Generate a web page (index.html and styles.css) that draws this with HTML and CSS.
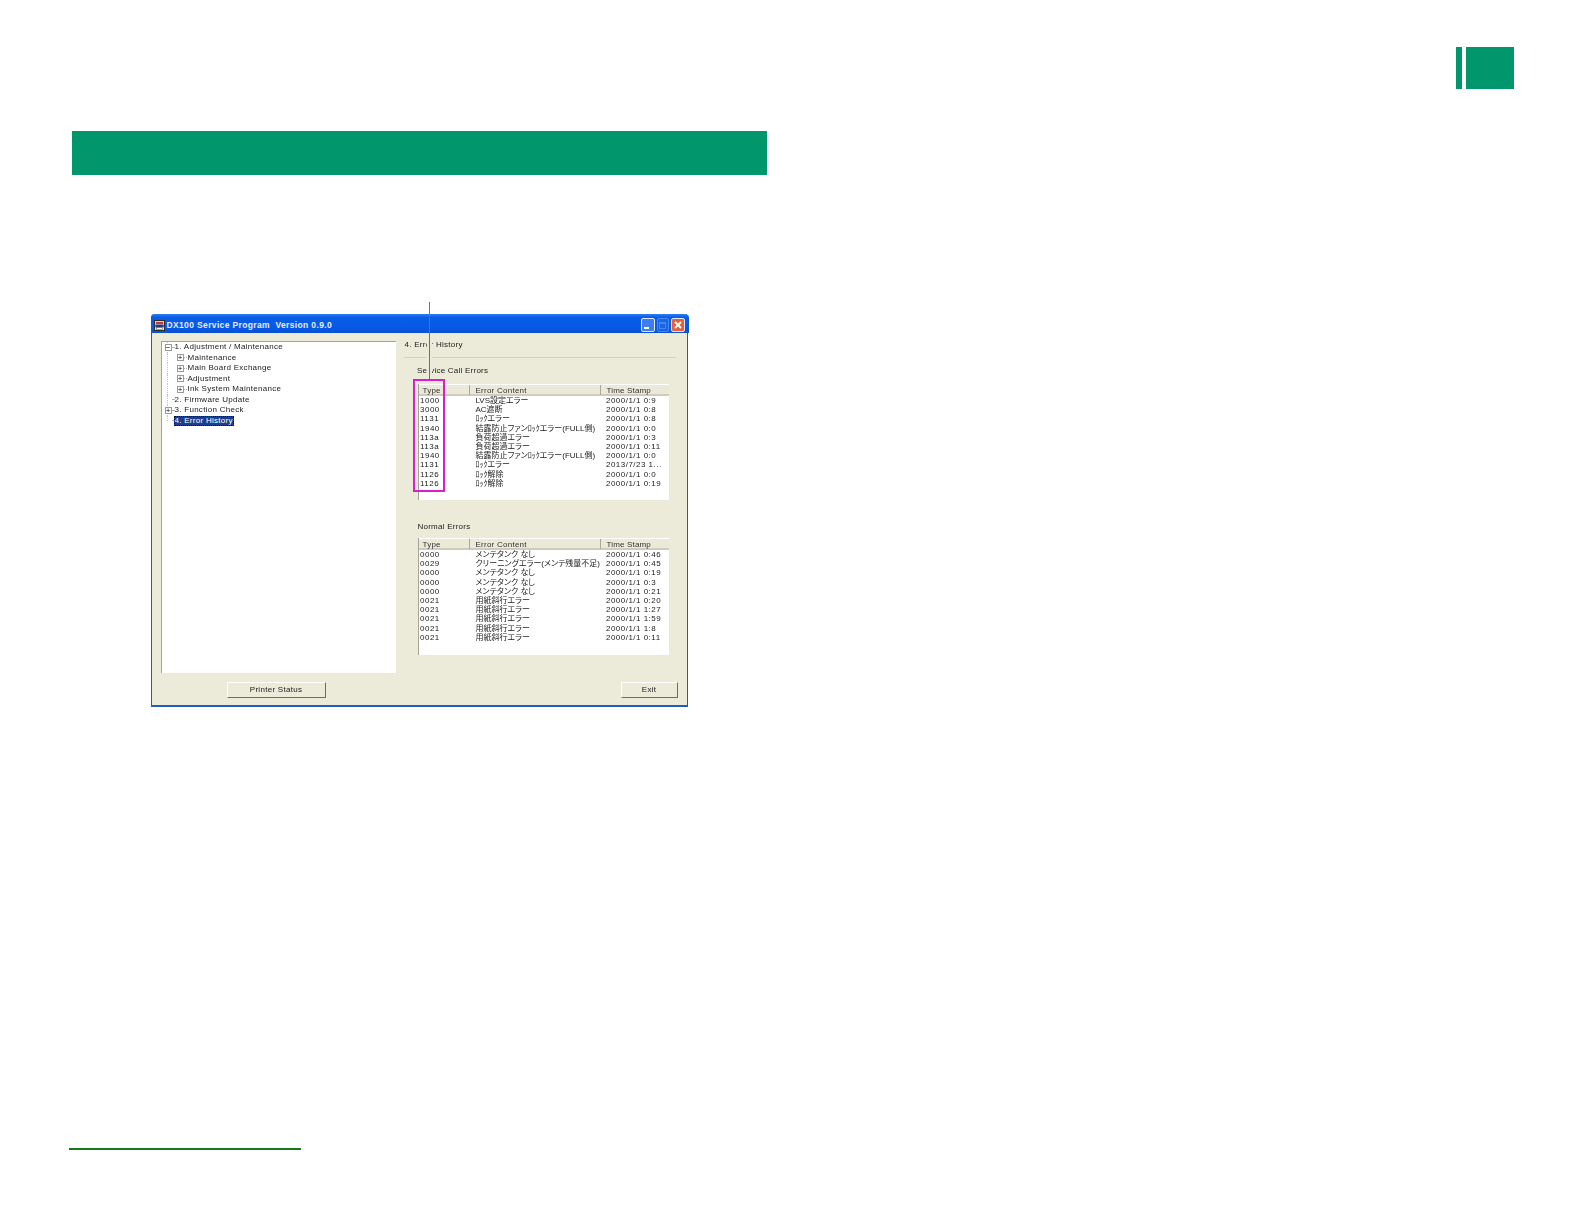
FILE: index.html
```html
<!DOCTYPE html>
<html lang="ja">
<head>
<meta charset="utf-8">
<title>DX100 Service Program</title>
<link rel="stylesheet" href="styles.css">
</head>
<body>
<div class="page">
  <div class="tabmark"><span class="tab-thin"></span><span class="tab-wide"></span></div>
  <div class="banner"></div>
  <figure class="figure">
    <div class="window">
      <div class="titlebar">
        <svg class="app-icon" viewBox="0 0 12 12"><rect x="0.5" y="0.5" width="11" height="11" fill="#dfe6f2" stroke="#222"/><rect x="2" y="2" width="8" height="2.5" fill="#c43b2e"/><rect x="1.5" y="5" width="9" height="3" fill="#1c3a78"/><rect x="3" y="8.5" width="6" height="2" fill="#fff" stroke="#333" stroke-width="0.5"/></svg>
        <span class="title-text">DX100 Service Program&nbsp; Version 0.9.0</span>
        <span class="tb-btn tb-min"><i></i></span>
        <span class="tb-btn tb-max"><i></i></span>
        <span class="tb-btn tb-close"><svg viewBox="0 0 12 12"><path d="M3 3 L9 9 M9 3 L3 9" stroke="#fff" stroke-width="1.8" fill="none"/></svg></span>
      </div>
      <div class="main">
        <div class="tree">
          <div class="node"><span class="ex">−</span><span class="dash"></span><span class="lbl">1. Adjustment / Maintenance</span></div>
          <div class="node lvl2"><span class="ex">+</span><span class="dash"></span><span class="lbl">Maintenance</span></div>
          <div class="node lvl2"><span class="ex">+</span><span class="dash"></span><span class="lbl">Main Board Exchange</span></div>
          <div class="node lvl2"><span class="ex">+</span><span class="dash"></span><span class="lbl">Adjustment</span></div>
          <div class="node lvl2"><span class="ex">+</span><span class="dash"></span><span class="lbl">Ink System Maintenance</span></div>
          <div class="node"><span class="ex none"></span><span class="dash"></span><span class="lbl">2. Firmware Update</span></div>
          <div class="node"><span class="ex">+</span><span class="dash"></span><span class="lbl">3. Function Check</span></div>
          <div class="node last"><span class="ex none"></span><span class="dash"></span><span class="lbl selected">4. Error History</span></div>
        </div>
        <div class="panel">
          <div class="panel-head">4. Error History</div>
          <div class="sep"></div>
          <div class="group-label first">Service Call Errors</div>
          <div class="list">
            <div class="row head"><span>Type</span><span>Error Content</span><span>Time Stamp</span></div>
            <div class="row"><span>1000</span><span>LVS設定エラー</span><span>2000/1/1 0:9</span></div>
            <div class="row"><span>3000</span><span>AC遮断</span><span>2000/1/1 0:8</span></div>
            <div class="row"><span>1131</span><span>ﾛｯｸエラー</span><span>2000/1/1 0:8</span></div>
            <div class="row"><span>1940</span><span>結露防止ファンﾛｯｸエラー(FULL側)</span><span>2000/1/1 0:0</span></div>
            <div class="row"><span>113a</span><span>負荷超過エラー</span><span>2000/1/1 0:3</span></div>
            <div class="row"><span>113a</span><span>負荷超過エラー</span><span>2000/1/1 0:11</span></div>
            <div class="row"><span>1940</span><span>結露防止ファンﾛｯｸエラー(FULL側)</span><span>2000/1/1 0:0</span></div>
            <div class="row"><span>1131</span><span>ﾛｯｸエラー</span><span>2013/7/23 1...</span></div>
            <div class="row"><span>1126</span><span>ﾛｯｸ解除</span><span>2000/1/1 0:0</span></div>
            <div class="row"><span>1126</span><span>ﾛｯｸ解除</span><span>2000/1/1 0:19</span></div>
          </div>
          <div class="group-label second">Normal Errors</div>
          <div class="list list-b">
            <div class="row head"><span>Type</span><span>Error Content</span><span>Time Stamp</span></div>
            <div class="row"><span>0000</span><span>メンテタンク なし</span><span>2000/1/1 0:46</span></div>
            <div class="row"><span>0029</span><span>クリーニングエラー(メンテ残量不足)</span><span>2000/1/1 0:45</span></div>
            <div class="row"><span>0000</span><span>メンテタンク なし</span><span>2000/1/1 0:19</span></div>
            <div class="row"><span>0000</span><span>メンテタンク なし</span><span>2000/1/1 0:3</span></div>
            <div class="row"><span>0000</span><span>メンテタンク なし</span><span>2000/1/1 0:21</span></div>
            <div class="row"><span>0021</span><span>用紙斜行エラー</span><span>2000/1/1 0:20</span></div>
            <div class="row"><span>0021</span><span>用紙斜行エラー</span><span>2000/1/1 1:27</span></div>
            <div class="row"><span>0021</span><span>用紙斜行エラー</span><span>2000/1/1 1:59</span></div>
            <div class="row"><span>0021</span><span>用紙斜行エラー</span><span>2000/1/1 1:8</span></div>
            <div class="row"><span>0021</span><span>用紙斜行エラー</span><span>2000/1/1 0:11</span></div>
          </div>
        </div>
      </div>
      <div class="actions">
        <button class="btn btn-status">Printer Status</button>
        <button class="btn btn-exit">Exit</button>
      </div>
    </div>
    <span class="callout-mask"></span>
    <span class="callout-line"></span>
    <span class="callout-box"></span>
  </figure>
  <div class="foot-rule"></div>
</div>
</body>
</html>
```
FILE: styles.css
```css
* { box-sizing: border-box; }
html, body { margin: 0; padding: 0; background: #fff; }
.page { width: 1584px; height: 1224px; padding: 47px 70px 0 69px; overflow: hidden; }

.tabmark { display: flex; justify-content: flex-end; gap: 4px; height: 42px; }
.tab-thin { width: 6px; background: #01966b; }
.tab-wide { width: 48px; background: #01966b; }

.banner { margin: 42px 0 0 3px; width: 695px; height: 44px; background: #01966b; }

.figure { position: relative; margin: 139px 0 0 82px; width: 537px; height: 393px; }

.window {
  width: 537px; height: 393px;
  display: flex; flex-direction: column;
  background: #ecead9;
  border: solid #1f5cc8; border-width: 0 1.5px 2px 1.5px;
  border-radius: 4px 4px 0 0;
  font: 8px/10px "Liberation Sans", "Noto Sans CJK JP", sans-serif;
  letter-spacing: 0.28px;
  color: #1c1c1c;
  filter: blur(0.3px);
}

.titlebar {
  height: 19px; flex: none; margin: 0 -1.5px;
  display: flex; align-items: center;
  padding: 2px 4px 0 3px;
  border-radius: 4px 4px 0 0;
  background: linear-gradient(#2a80f2 0, #0a5ce6 18%, #0559e4 75%, #0a50d0 100%);
  color: #e8eefc;
}
.app-icon { width: 11px; height: 11px; flex: none; margin-top: 1px; }
.title-text { margin-left: 2px; flex: 1; font-weight: bold; font-size: 8.5px; letter-spacing: 0.36px; }
.tb-btn {
  width: 14px; height: 14px; margin-left: 2px; flex: none;
  border: 1px solid #dfe8fb; border-radius: 2px;
  display: flex; align-items: flex-end; justify-content: flex-start;
  background: #3d7df0;
}
.tb-min i { width: 5px; height: 2px; background: #fff; margin: 0 0 2px 2px; }
.tb-max { width: 12px; opacity: 0.32; }
.tb-max i { width: 7px; height: 7px; border: 1px solid #cfe0ff; border-top-width: 2px; margin: 0 0 2px 1px; }
.tb-close { background: #e2623c; }
.tb-close svg { width: 12px; height: 12px; }

.main { flex: none; display: flex; gap: 8px; padding: 8px 9px 0 8.5px; }

.tree {
  width: 235px; height: 332px; flex: none;
  padding: 0 0 0 3px;
  background: #fff;
  border: solid #a5a396; border-width: 1px 0 0 1.5px;
}
.node { position: relative; display: flex; align-items: center; height: 10.5px; }
.node::before {
  content: ""; position: absolute; left: 2.5px; top: 0; bottom: 0;
  border-left: 1px dotted #c4c4c4;
}
.node.last::before { bottom: 5px; }
.ex {
  position: relative; z-index: 1;
  width: 7px; height: 7px; flex: none;
  border: 1px solid #9a9a9a; background: #fff;
  font: 8px/5px "Liberation Sans", sans-serif; letter-spacing: 0; text-align: center; color: #111;
}
.ex.none { border: 0; background: transparent; }
.dash { width: 2px; border-top: 1px dotted #b4b4b4; flex: none; }
.lvl2 .dash { width: 3px; }
.lbl { white-space: nowrap; padding: 0 1px; }
.lvl2 { padding-left: 12px; }
.selected { background: #1c3e8c; color: #fff; outline: 1px dotted #111; outline-offset: -1px; }

.panel { width: 272px; flex: none; }
.panel-head { height: 10px; margin: -1px 0 0 1px; }
.sep { height: 1px; margin-top: 7px; background: #d4d1be; }
.group-label { height: 10px; margin-left: 13.5px; letter-spacing: 0.24px; }
.group-label.first { margin-top: 8px; }
.group-label.second { margin-top: 22px; margin-left: 14px; }

.list {
  width: 251px; height: 116px; margin: 8px 0 0 14px;
  background: #fff;
  border-left: 1.5px solid #a5a396;
}
.list-b { height: 117px; margin-top: 6px; }
.row {
  display: grid; grid-template-columns: 51px 131px 1fr;
  height: 9.2px; line-height: 9.2px; white-space: nowrap;
}
.row > span { padding-left: 1.5px; letter-spacing: 0.5px; }
.row > span:nth-child(2) { padding-left: 6px; letter-spacing: 0; font-feature-settings: "palt"; }
.row > span:nth-child(3) { padding-left: 5.5px; letter-spacing: 0.48px; }
.row.head {
  height: 12px; line-height: 12px; color: #333;
  background: #ece9d8; border-top: 1px solid #fff; border-bottom: 2px solid #cfccbb;
}
.row.head > span { padding: 1px 0 0 4px; border-right: 1px solid #aca899; line-height: 9px; letter-spacing: 0.22px; }
.row.head > span:nth-child(2) { padding-left: 6px; letter-spacing: 0.25px; font-feature-settings: normal; }
.row.head > span:nth-child(3) { border-right: 0; padding-left: 6px; letter-spacing: 0.16px; }

.actions { flex: none; display: flex; justify-content: space-between; padding: 9px 9.5px 0 74.5px; }
.btn {
  height: 16px; padding: 0;
  background: #ecead9; color: #222;
  border: 1px solid; border-color: #fff #6f6d60 #6f6d60 #fff;
  font: inherit; letter-spacing: inherit;
}
.btn-status { width: 99px; }
.btn-exit { width: 57px; }

.callout-mask { position: absolute; left: 275.5px; top: 24px; width: 5px; height: 41px; background: #ecead9; }
.callout-line { position: absolute; left: 277.5px; top: -12px; width: 1.5px; height: 78px; background: #d52cc9; }
.callout-box { position: absolute; left: 262px; top: 65px; width: 32px; height: 113px; border: 2px solid #d91fcb; }

.foot-rule { margin-top: 441px; width: 232px; height: 2px; background: #1a761c; }
```
